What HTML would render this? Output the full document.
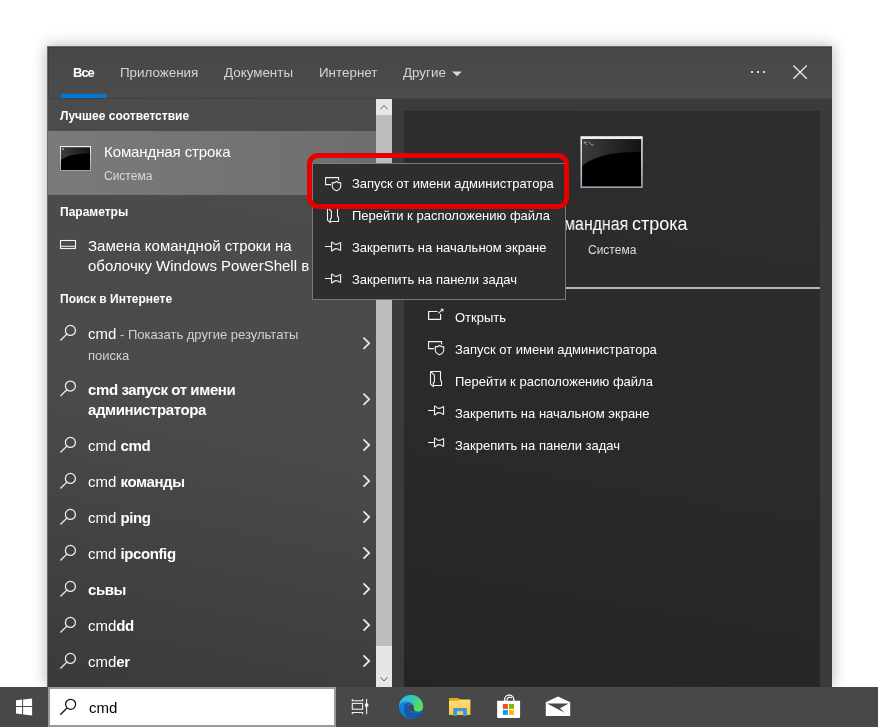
<!DOCTYPE html>
<html><head><meta charset="utf-8">
<style>
*{margin:0;padding:0;box-sizing:border-box}
html,body{width:878px;height:727px;overflow:hidden;background:#fff;font-family:"Liberation Sans",sans-serif}
.a{position:absolute}
.t{position:absolute;line-height:1;white-space:nowrap;will-change:transform}
svg.ov{position:absolute;left:0;top:0;width:878px;height:727px}
#win{position:absolute;left:47px;top:46px;width:785px;height:641px;background:#4a4a4a;border-left:1px solid #6a6a6a;border-top:1px solid #6a6a6a;box-shadow:0 0 14px rgba(0,0,0,0.3)}
#hdr{left:48px;top:47px;width:784px;height:51px;background:linear-gradient(180deg,#474747,#4c4c4c);box-shadow:inset 1px 1px 0 #3f3f3f}
#hdrline{left:48px;top:98px;width:784px;height:1px;background:#424242}
#left{left:48px;top:99px;width:328px;height:588px;background:linear-gradient(192deg,#4c4c4c 0%,#4a4a4a 55%,#3a3a3a 100%)}
.t b{letter-spacing:-0.4px}
#rout{left:392px;top:99px;width:440px;height:588px;background:#3b3b3b}
#rin{left:404px;top:111px;width:416px;height:576px;background:linear-gradient(190deg,#2d2d2d 0%,#2a2a2a 60%,#252525 100%)}
#best{left:48px;top:131px;width:328px;height:64px;background:linear-gradient(90deg,#7a7a7a,#6e6e6e)}
#sb{left:376px;top:99px;width:16px;height:588px;background:#e6e6e6}
#thumb{left:376px;top:115px;width:16px;height:531px;background:#bdbdbd}
#task{left:0;top:687px;width:878px;height:40px;background:#484848}
#sbox{left:48px;top:687px;width:288px;height:40px;background:#fff;border:2px solid #9a9a9a}
#menu{left:312px;top:163px;width:254px;height:137px;background:#2e2e2e;border:1px solid #7a7a7a}
#red{left:307px;top:153px;width:262px;height:56px;border:5px solid #e50000;border-radius:11px}
</style></head><body>
<div id="win"></div>
<div class="a" id="hdr"></div>
<div class="a" id="hdrline"></div>
<div class="a" id="left"></div>
<div class="a" id="rout"></div>
<div class="a" id="rin"></div>
<div class="a" id="best"></div>
<div class="a" id="sb"></div>
<div class="a" id="thumb"></div>
<div class="t" style="left:72.5px;top:65.8px;font-size:13px;color:#fff;font-weight:bold;letter-spacing:-1px">Все</div>
<div class="a" style="left:61px;top:94px;width:46px;height:4px;background:#0078d7"></div>
<div class="t" style="left:120px;top:66.06px;font-size:13.4px;color:#d4d4d4;">Приложения</div>
<div class="t" style="left:224px;top:66.06px;font-size:13.4px;color:#d4d4d4;">Документы</div>
<div class="t" style="left:319px;top:66.06px;font-size:13.4px;color:#d4d4d4;">Интернет</div>
<div class="t" style="left:403px;top:66.06px;font-size:13.4px;color:#d4d4d4;">Другие</div>
<div class="t" style="left:60px;top:109.84px;font-size:12px;color:#fff;font-weight:bold;">Лучшее соответствие</div>
<div class="t" style="left:104px;top:144.3px;font-size:15px;color:#fff;letter-spacing:-0.1px">Командная строка</div>
<div class="t" style="left:104px;top:170.04px;font-size:12px;color:#dadada;">Система</div>
<div class="t" style="left:60px;top:205.54px;font-size:12px;color:#fff;font-weight:bold;">Параметры</div>
<div class="t" style="left:88px;top:238.1px;font-size:15px;color:#fff;">Замена командной строки на</div>
<div class="t" style="left:88px;top:257.9px;font-size:15px;color:#fff;">оболочку Windows PowerShell в</div>
<div class="t" style="left:60px;top:293.24px;font-size:12px;color:#fff;font-weight:bold;">Поиск в Интернете</div>
<div class="t" style="left:88px;top:326.1px;font-size:15px;color:#fff;">cmd<span style="font-size:13px;color:#d0d0d0"> - Показать другие результаты</span></div>
<div class="t" style="left:88px;top:346.8px;font-size:15px;color:#fff;"><span style="font-size:13px;color:#d0d0d0">поиска</span></div>
<div class="t" style="left:88px;top:381.7px;font-size:15px;color:#fff;"><b>cmd запуск от имени</b></div>
<div class="t" style="left:88px;top:402.3px;font-size:15px;color:#fff;"><b>администратора</b></div>
<div class="t" style="left:88px;top:438.1px;font-size:15px;color:#fff;">cmd <b>cmd</b></div>
<div class="t" style="left:88px;top:474.1px;font-size:15px;color:#fff;">cmd <b>команды</b></div>
<div class="t" style="left:88px;top:510.1px;font-size:15px;color:#fff;">cmd <b>ping</b></div>
<div class="t" style="left:88px;top:546.1px;font-size:15px;color:#fff;">cmd <b>ipconfig</b></div>
<div class="t" style="left:88px;top:582.1px;font-size:15px;color:#fff;"><b>сьвы</b></div>
<div class="t" style="left:88px;top:618.1px;font-size:15px;color:#fff;">cmd<b>dd</b></div>
<div class="t" style="left:88px;top:654.1px;font-size:15px;color:#fff;">cmd<b>er</b></div>
<div class="t" style="left:545.8px;top:214.96px;font-size:18px;color:#fff;transform:scaleX(0.884);transform-origin:0 0">Командная</div>
<div class="t" style="left:632.3px;top:214.96px;font-size:18px;color:#fff;">строка</div>
<div class="t" style="left:587.5px;top:243.54px;font-size:12px;color:#dadada;">Система</div>
<div class="a" style="left:404px;top:287px;width:416px;height:2px;background:#b6b6b6"></div>
<div class="t" style="left:455.3px;top:311.2px;font-size:13px;color:#fff;">Открыть</div>
<div class="t" style="left:455.3px;top:343.2px;font-size:13px;color:#fff;">Запуск от имени администратора</div>
<div class="t" style="left:455.3px;top:375.2px;font-size:13px;color:#fff;">Перейти к расположению файла</div>
<div class="t" style="left:455.3px;top:407.2px;font-size:13px;color:#fff;">Закрепить на начальном экране</div>
<div class="t" style="left:455.3px;top:439.2px;font-size:13px;color:#fff;">Закрепить на панели задач</div>
<svg class="ov" viewBox="0 0 878 727"><circle cx="70.4" cy="330.40" r="5.0" fill="none" stroke="#f0f0f0" stroke-width="1.25"/><line x1="66.8" y1="334.10" x2="60.4" y2="340.50" stroke="#f0f0f0" stroke-width="1.3"/><circle cx="70.4" cy="386.00" r="5.0" fill="none" stroke="#f0f0f0" stroke-width="1.25"/><line x1="66.8" y1="389.70" x2="60.4" y2="396.10" stroke="#f0f0f0" stroke-width="1.3"/><circle cx="70.4" cy="442.40" r="5.0" fill="none" stroke="#f0f0f0" stroke-width="1.25"/><line x1="66.8" y1="446.10" x2="60.4" y2="452.50" stroke="#f0f0f0" stroke-width="1.3"/><circle cx="70.4" cy="478.40" r="5.0" fill="none" stroke="#f0f0f0" stroke-width="1.25"/><line x1="66.8" y1="482.10" x2="60.4" y2="488.50" stroke="#f0f0f0" stroke-width="1.3"/><circle cx="70.4" cy="514.40" r="5.0" fill="none" stroke="#f0f0f0" stroke-width="1.25"/><line x1="66.8" y1="518.10" x2="60.4" y2="524.50" stroke="#f0f0f0" stroke-width="1.3"/><circle cx="70.4" cy="550.40" r="5.0" fill="none" stroke="#f0f0f0" stroke-width="1.25"/><line x1="66.8" y1="554.10" x2="60.4" y2="560.50" stroke="#f0f0f0" stroke-width="1.3"/><circle cx="70.4" cy="586.40" r="5.0" fill="none" stroke="#f0f0f0" stroke-width="1.25"/><line x1="66.8" y1="590.10" x2="60.4" y2="596.50" stroke="#f0f0f0" stroke-width="1.3"/><circle cx="70.4" cy="622.40" r="5.0" fill="none" stroke="#f0f0f0" stroke-width="1.25"/><line x1="66.8" y1="626.10" x2="60.4" y2="632.50" stroke="#f0f0f0" stroke-width="1.3"/><circle cx="70.4" cy="658.40" r="5.0" fill="none" stroke="#f0f0f0" stroke-width="1.25"/><line x1="66.8" y1="662.10" x2="60.4" y2="668.50" stroke="#f0f0f0" stroke-width="1.3"/><polyline points="363.5,337.70 369.2,343.30 363.5,348.90" fill="none" stroke="#e6e6e6" stroke-width="1.8"/><polyline points="363.5,393.70 369.2,399.30 363.5,404.90" fill="none" stroke="#e6e6e6" stroke-width="1.8"/><polyline points="363.5,439.40 369.2,445.00 363.5,450.60" fill="none" stroke="#e6e6e6" stroke-width="1.8"/><polyline points="363.5,475.40 369.2,481.00 363.5,486.60" fill="none" stroke="#e6e6e6" stroke-width="1.8"/><polyline points="363.5,511.40 369.2,517.00 363.5,522.60" fill="none" stroke="#e6e6e6" stroke-width="1.8"/><polyline points="363.5,547.40 369.2,553.00 363.5,558.60" fill="none" stroke="#e6e6e6" stroke-width="1.8"/><polyline points="363.5,583.40 369.2,589.00 363.5,594.60" fill="none" stroke="#e6e6e6" stroke-width="1.8"/><polyline points="363.5,619.40 369.2,625.00 363.5,630.60" fill="none" stroke="#e6e6e6" stroke-width="1.8"/><polyline points="363.5,655.40 369.2,661.00 363.5,666.60" fill="none" stroke="#e6e6e6" stroke-width="1.8"/><rect x="60.5" y="240.5" width="15" height="8" fill="none" stroke="#f2f2f2" stroke-width="1.1"/><line x1="60.5" y1="246.3" x2="75.5" y2="246.3" stroke="#f2f2f2" stroke-width="1"/><polygon points="452.2,71.5 461.8,71.5 457,76.3" fill="#d8d8d8"/><rect x="751" y="71" width="2" height="2" fill="#dcdcdc"/><rect x="757" y="71" width="2" height="2" fill="#dcdcdc"/><rect x="763" y="71" width="2" height="2" fill="#dcdcdc"/><path d="M793.4,65.4 L806.8,78.8 M806.8,65.4 L793.4,78.8" stroke="#e8e8e8" stroke-width="1.35" fill="none"/><polyline points="380.5,109.2 384,105.5 387.5,109.2" fill="none" stroke="#5c5c5c" stroke-width="1"/><polyline points="380.5,677.3 384,681 387.5,677.3" fill="none" stroke="#5c5c5c" stroke-width="1"/><defs><linearGradient id="cg60" x1="0" y1="0" x2="1" y2="0"><stop offset="0" stop-color="#3c3c3c"/><stop offset="1" stop-color="#141414"/></linearGradient><linearGradient id="cg60b" x1="0" y1="0" x2="0" y2="1"><stop offset="0" stop-color="#f0f3f8"/><stop offset="0.5" stop-color="#c8ced8"/><stop offset="1" stop-color="#9aa4b4"/></linearGradient></defs><rect x="60" y="146" width="31" height="25" fill="url(#cg60b)"/><rect x="61" y="147.5" width="29" height="22.5" fill="#000"/><path d="M61,147.5 H90 V153.57 C78.40,153.57 68.25,154.70 61,160.10 Z" fill="url(#cg60)"/><rect x="62" y="148.6" width="2" height="1" fill="#ddd"/><defs><linearGradient id="cg580" x1="0" y1="0" x2="1" y2="0"><stop offset="0" stop-color="#3c3c3c"/><stop offset="1" stop-color="#141414"/></linearGradient><linearGradient id="cg580b" x1="0" y1="0" x2="0" y2="1"><stop offset="0" stop-color="#f0f3f8"/><stop offset="0.5" stop-color="#c8ced8"/><stop offset="1" stop-color="#9aa4b4"/></linearGradient></defs><rect x="580.5" y="136.2" width="62.2" height="51.8" fill="url(#cg580b)"/><rect x="582.1" y="139.2" width="59.0" height="47.199999999999996" fill="#000"/><path d="M582.1,139.2 H641.1 V151.94 C617.50,151.94 596.85,154.30 582.1,165.63 Z" fill="url(#cg580)"/><path d="M584,142 h1.2 v1.2 h-1.2z M586.5,142 v1 M586.5,144 v1 M588.5,141.5 L591.5,145 h2" stroke="#bbb" stroke-width="0.8" fill="none"/><path d="M437.6,311.5 H428.6 V319.4 H440.6 V314" fill="none" stroke="#f2f2f2" stroke-width="1.2"/><path d="M438.4,313.4 L441.6,310.4" stroke="#f2f2f2" stroke-width="1.2"/><path d="M440.2,308.7 H443.4 V311.9 Z" fill="#f2f2f2"/><path transform="translate(103,164)" d="M331,184.6 H325.6 V177.6 H338.6 V180.6" fill="none" stroke="#f2f2f2" stroke-width="1.1"/><path transform="translate(103,164)" d="M332.3,182.9 Q334.6,182.9 336.5,181.5 Q338.4,182.9 340.7,182.9 V186.3 Q340.7,189 336.5,190.8 Q332.3,189 332.3,186.3 Z" fill="none" stroke="#f2f2f2" stroke-width="1.1"/><path transform="translate(0,0)" d="M433.6,385.5 H441.5 V381.2 L440.5,380.4 V371.5 H430.5 V384.2 L433.3,386.6 V383 L434.4,382 V375.2 L430.5,371.5" fill="none" stroke="#f2f2f2" stroke-width="1.1" stroke-linejoin="round"/><path transform="translate(0,0)" d="M428,410.5 H434.5 M434.5,406.3 V414.6 H435.6 Q437,412.6 439,412.6 Q441,412.6 442.6,414.1 H443.6 V406.9 H442.6 Q441,408.4 439,408.4 Q437,408.4 435.6,406.3 Z" fill="none" stroke="#f2f2f2" stroke-width="1.1"/><path transform="translate(0,32)" d="M428,410.5 H434.5 M434.5,406.3 V414.6 H435.6 Q437,412.6 439,412.6 Q441,412.6 442.6,414.1 H443.6 V406.9 H442.6 Q441,408.4 439,408.4 Q437,408.4 435.6,406.3 Z" fill="none" stroke="#f2f2f2" stroke-width="1.1"/></svg>
<div class="a" id="menu"></div>
<div class="t" style="left:352.3px;top:176.8px;font-size:13px;color:#fff;">Запуск от имени администратора</div>
<div class="t" style="left:352.3px;top:208.8px;font-size:13px;color:#fff;">Перейти к расположению файла</div>
<div class="t" style="left:352.3px;top:240.8px;font-size:13px;color:#fff;">Закрепить на начальном экране</div>
<div class="t" style="left:352.3px;top:272.8px;font-size:13px;color:#fff;">Закрепить на панели задач</div>
<svg class="ov" viewBox="0 0 878 727"><path transform="translate(0,0)" d="M331,184.6 H325.6 V177.6 H338.6 V180.6" fill="none" stroke="#f2f2f2" stroke-width="1.1"/><path transform="translate(0,0)" d="M332.3,182.9 Q334.6,182.9 336.5,181.5 Q338.4,182.9 340.7,182.9 V186.3 Q340.7,189 336.5,190.8 Q332.3,189 332.3,186.3 Z" fill="none" stroke="#f2f2f2" stroke-width="1.1"/><path transform="translate(-103,-164)" d="M433.6,385.5 H441.5 V381.2 L440.5,380.4 V371.5 H430.5 V384.2 L433.3,386.6 V383 L434.4,382 V375.2 L430.5,371.5" fill="none" stroke="#f2f2f2" stroke-width="1.1" stroke-linejoin="round"/><path transform="translate(-103,-164)" d="M428,410.5 H434.5 M434.5,406.3 V414.6 H435.6 Q437,412.6 439,412.6 Q441,412.6 442.6,414.1 H443.6 V406.9 H442.6 Q441,408.4 439,408.4 Q437,408.4 435.6,406.3 Z" fill="none" stroke="#f2f2f2" stroke-width="1.1"/><path transform="translate(-103,-132)" d="M428,410.5 H434.5 M434.5,406.3 V414.6 H435.6 Q437,412.6 439,412.6 Q441,412.6 442.6,414.1 H443.6 V406.9 H442.6 Q441,408.4 439,408.4 Q437,408.4 435.6,406.3 Z" fill="none" stroke="#f2f2f2" stroke-width="1.1"/></svg>
<div class="a" id="red"></div>
<div class="a" id="task"></div>
<div class="a" id="sbox"></div>
<div class="t" style="left:88.5px;top:699.9px;font-size:15px;color:#000;">cmd</div>
<svg class="ov" viewBox="0 0 878 727"><polygon points="16,700.3 22.1,699.6 22.1,706 16,706" fill="#fff"/><polygon points="23.1,699.4 32.1,698.4 32.1,706 23.1,706" fill="#fff"/><polygon points="16,707 22.1,707 22.1,714.3 16,713.6" fill="#fff"/><polygon points="23.1,707 32.1,707 32.1,715.4 23.1,714.4" fill="#fff"/><circle cx="70.6" cy="704.3" r="5" fill="none" stroke="#111" stroke-width="1.25"/><line x1="67" y1="708" x2="60.3" y2="714.7" stroke="#111" stroke-width="1.3"/><path d="M352.3,699 V700.7 H362.6 V699 M352.3,714.2 V712.5 H362.6 V714.2" fill="none" stroke="#f0f0f0" stroke-width="1.1"/><rect x="352.3" y="703.4" width="10.3" height="5.8" fill="none" stroke="#f0f0f0" stroke-width="1.1"/><line x1="366.6" y1="699" x2="366.6" y2="714.2" stroke="#f0f0f0" stroke-width="1.1"/><rect x="365" y="703.5" width="3.3" height="3.2" fill="#f0f0f0"/><defs><linearGradient id="eg1" x1="0" y1="0" x2="1" y2="0.3"><stop offset="0" stop-color="#35b9f0"/><stop offset="0.5" stop-color="#2fc4c8"/><stop offset="1" stop-color="#60dc50"/></linearGradient><linearGradient id="eg2" x1="0" y1="0" x2="0.3" y2="1"><stop offset="0" stop-color="#1f8ae0"/><stop offset="1" stop-color="#1272d0"/></linearGradient></defs><circle cx="411.1" cy="706.8" r="12.1" fill="url(#eg2)"/><path d="M399.1,706 A12.05,12.05 0 0 1 423.15,706.6 Q423,711.2 418.6,711.5 Q414.6,711.6 413.3,709.8 Q415.2,706 412.2,703.4 Q408,700.6 403,701.7 Q400,703 399.1,706 Z" fill="url(#eg1)"/><path d="M404.2,705.5 Q406,702.2 410.8,702.4 Q407.6,703.8 408,707.6 Q408.8,711.8 413.6,712.6 Q418.6,713.3 422.4,711.8 Q420.5,716.8 414,718.4 Q406.5,719.4 404.6,712.8 Q403.8,708.5 404.2,705.5 Z" fill="#1458a8"/><path d="M408.2,706.8 Q408.6,704.3 411,704.3 Q413.5,704.6 413.5,707.3 Q413.4,709.8 415.6,711.3 Q412.2,711.7 410.1,710.4 Q408.1,709 408.2,706.8 Z" fill="#484848"/><defs><linearGradient id="fg" x1="0" y1="0" x2="0" y2="1"><stop offset="0" stop-color="#ffe084"/><stop offset="1" stop-color="#ffc83a"/></linearGradient></defs><path d="M449,698 H458 L459.3,699.4 H470.4 V714.9 H449 Z" fill="url(#fg)"/><path d="M449,698 H458.3 L459.6,699.2 L458.3,700.7 H449 Z" fill="#e8a80a"/><path d="M453.2,716 V709 Q453.2,708 454.2,708 H465.9 Q466.9,708 466.9,709 V716 H463 V711.3 H457 V716 Z" fill="#3b97e3"/><path d="M497.1,700.8 H520.1 V717 Q520.1,718.1 519,718.1 H498.2 Q497.1,718.1 497.1,717 Z" fill="#fff"/><path d="M504.6,701 V699.5 A4.6,4.4 0 0 1 513.8,699.5 V701" fill="none" stroke="#fff" stroke-width="1.3"/><path d="M507,701 V699.8 A3,3 0 0 1 512,698" fill="none" stroke="#fff" stroke-width="1.1"/><rect x="502.9" y="704" width="5" height="4.9" fill="#f25022"/><rect x="509" y="704" width="5" height="4.9" fill="#7fba00"/><rect x="502.9" y="710" width="5" height="4.9" fill="#00a4ef"/><rect x="509" y="710" width="5" height="4.9" fill="#ffb900"/><polygon points="545.8,702.3 558,696.5 570.2,702.3 570.2,716 545.8,716" fill="#fff"/><polygon points="547,703.4 568.7,703.4 560,708.2 564.8,712.8" fill="#484848"/></svg>
</body></html>
